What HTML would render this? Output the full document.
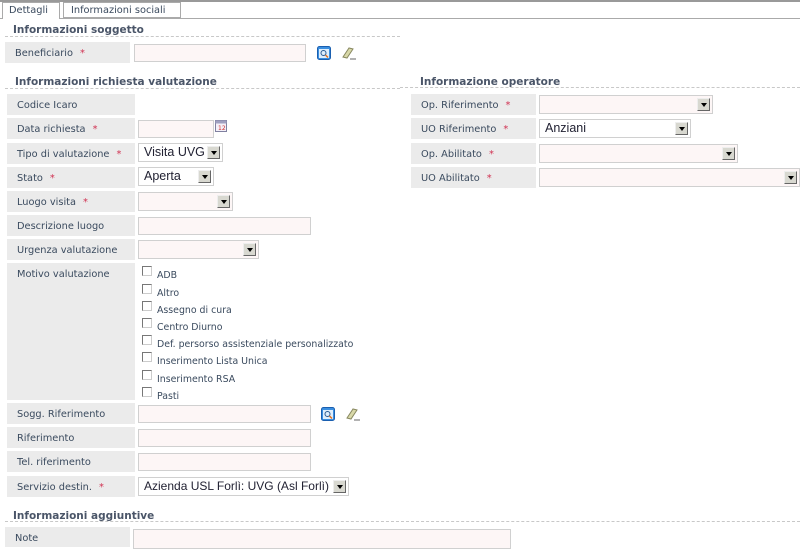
<!DOCTYPE html>
<html><head><meta charset="utf-8"><style>
*{margin:0;padding:0;box-sizing:border-box}
body{width:800px;height:543px;overflow:hidden;background:#fff;font-family:"DejaVu Sans","Liberation Sans",sans-serif;font-size:9.8px;color:#3a4a5e;position:relative}
.a{position:absolute}
.lab{position:absolute;background:#ebebeb;padding:3px 0 0 10px;line-height:18px;height:21px;width:128px;overflow:hidden}
.st{color:#d03050;margin-left:7px}
.h{position:absolute;font-weight:bold;font-size:10.5px;color:#4a5568}
.d{position:absolute;height:0;border-top:1px dashed #c8c8c8}
.in{position:absolute;background:#fdf6f6;border:1px solid #d0d0d0;height:18px}
.sel{position:absolute;background:#fff;border:1px solid #d0d0d0;height:19px;font-family:"Liberation Sans",sans-serif;font-size:12.5px;color:#223;padding-left:5px;line-height:17px;white-space:nowrap;overflow:hidden}
.sel.e{background:#fdf6f6}
.sel i{position:absolute;right:2px;top:2px;width:13px;height:13px;background:#d8d8d0;border:1px solid #666;border-top-color:#eee;border-left-color:#eee}
.sel i:after{content:"";position:absolute;left:3px;top:4px;border-left:3px solid transparent;border-right:3px solid transparent;border-top:4px solid #000}
.cb{position:absolute;left:142px;width:10px;height:10px;border:1px solid #777;border-right-color:#ccc;border-bottom-color:#ccc;background:#fff}
.cl{position:absolute;left:157px;font-size:9.4px}
</style></head><body>
<div class="a" style="left:0;top:0;width:800px;height:2px;background:#999"></div>
<div class="a" style="left:0;top:18px;width:800px;height:1px;background:#aaa"></div>
<div class="a" style="left:2px;top:2px;width:58px;height:17px;background:#fff;border:1px solid #aaa;border-bottom:none;padding:2px 0 0 6px">Dettagli</div>
<div class="a" style="left:63px;top:2px;width:118px;height:16px;background:#fff;border:1px solid #aaa;padding:2px 0 0 7px">Informazioni sociali</div>

<div class="h" style="left:13px;top:24px">Informazioni soggetto</div>
<div class="d" style="left:5px;top:36px;width:395px"></div>
<div class="lab" style="left:5px;top:42px;width:125px">Beneficiario<span class="st">*</span></div>
<div class="in" style="left:134px;top:44px;width:172px"></div>
<svg class="a" style="left:317px;top:46px" width="14" height="14"><rect x="0.5" y="0.5" width="13" height="13" rx="2" fill="#3b8fe0" stroke="#1a5fb0"/><rect x="2" y="3" width="10" height="9" fill="#dfeefc"/><circle cx="6.5" cy="7" r="2.5" fill="none" stroke="#2a5a90"/><line x1="8.5" y1="9" x2="11" y2="11.5" stroke="#e07020" stroke-width="1.5"/></svg>
<svg class="a" style="left:341px;top:46px" width="16" height="14"><path d="M2 11 L8 2 L12 3 L6 12 Z" fill="#d8d8a8" stroke="#888860"/><line x1="9" y1="13" x2="15" y2="13" stroke="#666"/></svg>

<div class="h" style="left:15px;top:76px">Informazioni richiesta valutazione</div>
<div class="d" style="left:5px;top:88px;width:395px"></div>
<div class="h" style="left:420px;top:76px">Informazione operatore</div>
<div class="d" style="left:400px;top:87px;width:400px"></div>

<div class="lab" style="left:7px;top:94px">Codice Icaro</div>
<div class="lab" style="left:7px;top:118px">Data richiesta<span class="st">*</span></div>
<div class="in" style="left:138px;top:120px;width:76px"></div>
<svg class="a" style="left:215px;top:119px" width="13" height="13"><rect x="0.5" y="1.5" width="11" height="11" fill="#f4f0f8" stroke="#8080a0"/><rect x="0.5" y="1.5" width="11" height="3" fill="#a0a0c0"/><text x="3" y="11" font-size="6" fill="#d03030" font-family="DejaVu Sans">12</text></svg>
<div class="lab" style="left:7px;top:143px">Tipo di valutazione<span class="st">*</span></div>
<div class="sel" style="left:138px;top:143px;width:85px">Visita UVG<i></i></div>
<div class="lab" style="left:7px;top:167px">Stato<span class="st">*</span></div>
<div class="sel" style="left:138px;top:167px;width:76px">Aperta<i></i></div>
<div class="lab" style="left:7px;top:191px">Luogo visita<span class="st">*</span></div>
<div class="sel e" style="left:138px;top:192px;width:95px"><i></i></div>
<div class="lab" style="left:7px;top:215px">Descrizione luogo</div>
<div class="in" style="left:138px;top:217px;width:173px"></div>
<div class="lab" style="left:7px;top:239px">Urgenza valutazione</div>
<div class="sel e" style="left:138px;top:240px;width:121px"><i></i></div>
<div class="lab" style="left:7px;top:263px;height:137px">Motivo valutazione</div>

<div class="cb" style="top:266px"></div><div class="cl" style="top:270px">ADB</div>
<div class="cb" style="top:284px"></div><div class="cl" style="top:288px">Altro</div>
<div class="cb" style="top:301px"></div><div class="cl" style="top:305px">Assegno di cura</div>
<div class="cb" style="top:318px"></div><div class="cl" style="top:322px">Centro Diurno</div>
<div class="cb" style="top:335px"></div><div class="cl" style="top:339px">Def. persorso assistenziale personalizzato</div>
<div class="cb" style="top:352px"></div><div class="cl" style="top:356px">Inserimento Lista Unica</div>
<div class="cb" style="top:370px"></div><div class="cl" style="top:374px">Inserimento RSA</div>
<div class="cb" style="top:387px"></div><div class="cl" style="top:391px">Pasti</div>

<div class="lab" style="left:7px;top:403px">Sogg. Riferimento</div>
<div class="in" style="left:138px;top:405px;width:173px"></div>
<svg class="a" style="left:321px;top:407px" width="14" height="14"><rect x="0.5" y="0.5" width="13" height="13" rx="2" fill="#3b8fe0" stroke="#1a5fb0"/><rect x="2" y="3" width="10" height="9" fill="#dfeefc"/><circle cx="6.5" cy="7" r="2.5" fill="none" stroke="#2a5a90"/><line x1="8.5" y1="9" x2="11" y2="11.5" stroke="#e07020" stroke-width="1.5"/></svg>
<svg class="a" style="left:345px;top:407px" width="16" height="14"><path d="M2 11 L8 2 L12 3 L6 12 Z" fill="#d8d8a8" stroke="#888860"/><line x1="9" y1="13" x2="15" y2="13" stroke="#666"/></svg>
<div class="lab" style="left:7px;top:427px">Riferimento</div>
<div class="in" style="left:138px;top:429px;width:173px"></div>
<div class="lab" style="left:7px;top:451px">Tel. riferimento</div>
<div class="in" style="left:138px;top:453px;width:173px"></div>
<div class="lab" style="left:7px;top:476px">Servizio destin.<span class="st">*</span></div>
<div class="sel" style="left:138px;top:477px;width:211px;font-size:12px">Azienda USL Forlì: UVG (Asl Forlì)<i></i></div>

<div class="lab" style="left:411px;top:94px;width:125px">Op. Riferimento<span class="st">*</span></div>
<div class="sel e" style="left:539px;top:95px;width:174px"><i></i></div>
<div class="lab" style="left:411px;top:118px;width:125px">UO Riferimento<span class="st">*</span></div>
<div class="sel" style="left:539px;top:119px;width:152px">Anziani<i></i></div>
<div class="lab" style="left:411px;top:143px;width:125px">Op. Abilitato<span class="st">*</span></div>
<div class="sel e" style="left:539px;top:144px;width:199px"><i></i></div>
<div class="lab" style="left:411px;top:167px;width:125px">UO Abilitato<span class="st">*</span></div>
<div class="sel e" style="left:539px;top:168px;width:261px"><i></i></div>

<div class="h" style="left:13px;top:510px">Informazioni aggiuntive</div>
<div class="d" style="left:5px;top:521px;width:795px"></div>
<div class="lab" style="left:5px;top:527px;width:125px;height:20px">Note</div>
<div class="in" style="left:133px;top:529px;width:378px;height:20px"></div>
</body></html>
